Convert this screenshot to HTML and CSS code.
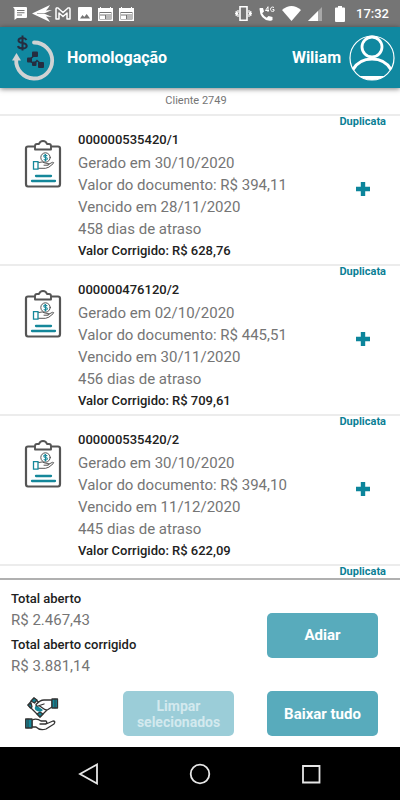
FILE: index.html
```html
<!DOCTYPE html>
<html lang="pt-BR">
<head>
<meta charset="utf-8">
<meta name="viewport" content="width=device-width, initial-scale=1">
<title>Homologação</title>
<link rel="stylesheet" href="styles.css">
</head>
<body>
<svg class="defs" aria-hidden="true">
  <symbol id="clipboard" viewBox="0 0 50 50">
    <g fill="none" stroke="#555" stroke-width="2.200" stroke-linejoin="round" stroke-linecap="round">
      <path d="M16 6.500H10q-2 0-2 2V44q0 2.500 2 2.500h30q2 0 2-2.500V8.500q0-2-2-2h-6"/>
      <path d="M17 9.500V6q0-2 2-2h2q1-3 4-3t4 3h2q2 0 2 2v3.500z" stroke-width="1.900"/>
      <circle cx="27.500" cy="17.500" r="4.700" stroke-width="1"/>
      <path d="M20.500 22.500q4-1.500 7 .7l3 .3q1.500 1-.5 1.700h-4M30 24.500l4.500-2.200q2-.2.500 1.500-4.500 4.500-7.500 4.500h-7" stroke-width="1"/>
    </g>
    <g fill="none" stroke="#14879a">
      <path d="M15.500 21.700h4.500v7.500h-4.500z" stroke-width="1.300"/>
      <path d="M29.300 15.800q-3.600-1.500-3.500.4.100 1.200 1.800 1.300 2 .2 1.700 1.700-.5 1.500-3.600.2M27.500 14v7.500" stroke-width="1.100"/>
      <path d="M18 36h15M14 41h23" stroke-width="2.300" stroke-linecap="round"/>
    </g>
  </symbol>
  <symbol id="plus" viewBox="0 0 14 14"><path fill="#0c859b" d="M4.800 0h4.400v4.800H14v4.400H9.200V14H4.800V9.200H0V4.800h4.800z"/></symbol>
  <symbol id="news" viewBox="0 0 15 14">
    <path fill="#fff" fill-rule="evenodd" d="M0 1h2V0h1v1h9V0h1v1h2v13H0zM1.500 5v7.500h12V5z"/>
    <path fill="#fff" d="M2 6h11v1.500H2zM2 8.500h5V12H2zM8 8.500h5v1H8zM8 10.500h5v1H8z"/>
  </symbol>
</svg>

<div class="app">
  <div class="status">
    <div class="status-left">
      <svg width="14" height="13" viewBox="0 0 14 13"><path fill="#fff" fill-rule="evenodd" d="M0 0h13q1 0 1 1v9q0 1-1 1H4l-2.500 2V2zM4 3v1h7.500V3zM4 5.200v1h7.500v-1zM4 7.500v1h5v-1z"/></svg>
      <svg width="20" height="17" viewBox="0 0 20 17"><path fill="#fff" d="M0 8.500 18 0q-1.500 3-4 5.500L20 5l-8 3.500 8 3.500-6-.5Q16.500 14 18 17z"/><path d="M5 8.500h9" stroke="#757575" stroke-width=".6"/></svg>
      <svg width="16" height="13" viewBox="0 0 16 13"><path fill="none" stroke="#fff" stroke-width="1.500" stroke-linejoin="round" d="M1 12V2q0-1.500 2-1l5 4.500L13 1q2-.5 2 1v10h-3V6L8 9.500 4 6v6z"/></svg>
      <svg width="14" height="14" viewBox="0 0 14 14"><path fill="#fff" fill-rule="evenodd" d="M1 0h12q1 0 1 1v12q0 1-1 1H1q-1 0-1-1V1q0-1 1-1zM2 11.500h10L8.700 7 6.300 10 4.500 8z"/></svg>
      <svg width="15" height="14"><use href="#news"/></svg>
      <svg width="15" height="14"><use href="#news"/></svg>
    </div>
    <div class="status-right">
      <svg width="17" height="15" viewBox="0 0 17 15"><g fill="none" stroke="#fff" stroke-width="1.200"><path d="M5 .8h7v13.400H5z" stroke-width="1.600"/><path d="M3 4v2.500L2 7.500l1 1V11M1 5l.5 1.500L.500 7.500l1 1L1 10M14 4v2.500l1 1-1 1V11M16 5l-.5 1.500 1 1-1 1L16 10"/></g></svg>
      <svg width="16" height="15" viewBox="0 0 16 15"><path fill="#fff" d="M1 2h3l1 3.500-1.800 1.800q1.500 3 4.500 4.500l1.800-1.800 4 1V14q-1 1-3 .7Q1 13.500.5 3 .5 2 1 2z"/><g fill="none" stroke="#fff"><path d="M9 6V.7L6.500 4.500H10M15 1.500Q12 0 11.500 3.300q.5 3 3.500 1.700V3.500h-1.500"/></g></svg>
      <svg width="19" height="15" viewBox="0 0 19 15"><path fill="#fff" d="M0 4q9.500-8 19 0L9.500 15z"/></svg>
      <svg width="14" height="14" viewBox="0 0 14 14"><path fill="#a8a8a8" d="M14 0v14H0z"/><path fill="#fff" d="M10 4v10H0z"/></svg>
      <svg class="battery" width="10" height="16" viewBox="0 0 10 16"><path fill="#fff" d="M3 0h4v1.500h2q1 0 1 1V15q0 1-1 1H1q-1 0-1-1V2.500q0-1 1-1h2z"/></svg>
      <span class="clock">17:32</span>
    </div>
  </div>

  <header class="bar">
    <svg width="44" height="46" viewBox="0 0 44 46">
      <path d="M22 7.500a18 18 0 1 1-17.800 17" fill="none" stroke="#d0d2d3" stroke-width="3.800" stroke-linecap="round"/>
      <path fill="#d0d2d3" d="M0 25.500 4.500 18 9 25.500z"/>
      <path d="M14.500 5q-1-2-4-2-4 0-4 2.500 0 2 4 2.500t4.300 3q-.3 2.500-4.300 2.500T6 11M10.500.5v15" fill="none" stroke="#252d40" stroke-width="2"/>
      <g fill="#252d40"><rect x="20" y="16.500" width="6" height="5.500" rx="1"/><rect x="15" y="22.500" width="5" height="5" rx="1"/><rect x="20" y="26.500" width="4.500" height="4.500" rx="1"/><rect x="26" y="27" width="6" height="6" rx="1"/></g>
      <path d="m23 20-6 5 5 4 3-3.500 4 3.500" fill="none" stroke="#252d40" stroke-width="1.500"/>
    </svg>
    <h1 class="title">Homologação</h1>
    <span class="user">Wiliam</span>
    <svg width="46" height="46" viewBox="0 0 46 46" fill="none" stroke="#fff"><circle cx="23" cy="23" r="22" stroke-width="1.200"/><circle cx="23" cy="12" r="10" stroke-width="2.800"/><path d="M4 34.500Q10 24 23 24t19 10.500" stroke-width="3.200"/><path d="M10 41h26q-6 4-13 4t-13-4z" fill="#fff" stroke="none"/></svg>
  </header>

  <main class="list">
    <p class="client">Cliente 2749</p>
    <ul class="docs">
      <li class="doc">
        <svg class="doc-icon"><use href="#clipboard"/></svg>
        <div class="doc-text">
          <h2 class="doc-number">000000535420/1</h2>
          <p>Gerado em 30/10/2020</p>
          <p>Valor do documento: R$ 394,11</p>
          <p>Vencido em 28/11/2020</p>
          <p>458 dias de atraso</p>
          <p class="fixed">Valor Corrigido: R$ 628,76</p>
        </div>
        <div class="doc-side"><span>Duplicata</span><button class="add" aria-label="Adicionar"><svg width="14" height="14"><use href="#plus"/></svg></button></div>
      </li>
      <li class="doc">
        <svg class="doc-icon"><use href="#clipboard"/></svg>
        <div class="doc-text">
          <h2 class="doc-number">000000476120/2</h2>
          <p>Gerado em 02/10/2020</p>
          <p>Valor do documento: R$ 445,51</p>
          <p>Vencido em 30/11/2020</p>
          <p>456 dias de atraso</p>
          <p class="fixed">Valor Corrigido: R$ 709,61</p>
        </div>
        <div class="doc-side"><span>Duplicata</span><button class="add" aria-label="Adicionar"><svg width="14" height="14"><use href="#plus"/></svg></button></div>
      </li>
      <li class="doc">
        <svg class="doc-icon"><use href="#clipboard"/></svg>
        <div class="doc-text">
          <h2 class="doc-number">000000535420/2</h2>
          <p>Gerado em 30/10/2020</p>
          <p>Valor do documento: R$ 394,10</p>
          <p>Vencido em 11/12/2020</p>
          <p>445 dias de atraso</p>
          <p class="fixed">Valor Corrigido: R$ 622,09</p>
        </div>
        <div class="doc-side"><span>Duplicata</span><button class="add" aria-label="Adicionar"><svg width="14" height="14"><use href="#plus"/></svg></button></div>
      </li>
      <li class="doc">
        <div class="doc-side"><span>Duplicata</span></div>
      </li>
    </ul>
  </main>

  <footer class="summary">
    <dl class="totals">
      <dt>Total aberto</dt><dd>R$ 2.467,43</dd>
      <dt>Total aberto corrigido</dt><dd>R$ 3.881,14</dd>
    </dl>
    <button class="btn">Adiar</button>
    <svg class="hands" width="34" height="34" viewBox="0 0 34 34">
      <g stroke="#333" stroke-width="1.300" stroke-linejoin="round" stroke-linecap="round">
        <path fill="#fff" d="M9 1 3 8l12 12 7-7z"/>
        <path fill="#14879a" d="m9 1-3 3 3.500 2L12 3zM3 8l3-2 1 4-1.500 1zM12 17l3-2 3 2-3 3z"/>
        <path fill="#14879a" stroke="none" d="M11 8q-3 4 1 6t6-1z"/>
        <path fill="#fff" d="M27 3h-8q-4 0-8 4.500 0 2.500 3.500 1l4.500-1.500M14 8.500l5 3.500q2 1.500 4 .5l4-2.500V3"/>
        <path fill="#14879a" d="M27 2h5.500v9H27z"/>
        <path fill="#fff" d="M7 23q5-2 9 1h5q2 2-1 3h-5 6l7-3q3 0 1 3l-8 5q-6 2-10-2H7z"/>
        <path fill="#14879a" d="M.7 22H7v9H.7z"/>
        <path d="M30 2v9M3 22v9" fill="none" stroke-width=".8"/>
      </g>
    </svg>
    <button class="btn" disabled>Limpar selecionados</button>
    <button class="btn">Baixar tudo</button>
  </footer>

  <nav class="nav">
    <button aria-label="Voltar"><svg width="22" height="22" viewBox="0 0 22 22"><path d="M19 1.500v19L2 11z"/></svg></button>
    <button aria-label="Início"><svg width="22" height="22" viewBox="0 0 22 22"><circle cx="11" cy="11" r="9.300"/></svg></button>
    <button aria-label="Recentes"><svg width="22" height="22" viewBox="0 0 22 22"><path d="M3 3h16.500v16.500H3z"/></svg></button>
  </nav>
</div>
</body>
</html>
```
FILE: styles.css
```css
* { box-sizing: border-box; margin: 0; padding: 0; }
body { font-family: Roboto, "Liberation Sans", sans-serif; background: #fff; color: #757575; }
svg { display: block; flex: none; }
button { font: inherit; border: 0; background: none; }
.defs { position: absolute; width: 0; height: 0; }
.app { display: flex; flex-direction: column; height: 100vh; }

.status { display: flex; justify-content: space-between; align-items: center; height: 27px; padding: 0 11px 0 13px; background: #757575; flex: none; }
.status-left { display: flex; align-items: center; gap: 6px; }
.status-left svg:nth-child(2) { margin: 0 -3px 0 -1px; }
.status-left svg:nth-child(3) { margin-right: 1px; }
.status-right { display: flex; align-items: center; gap: 7px; }
.battery { margin: 0 4px 0 6px; }
.clock { color: #fff; font-size: 13px; font-weight: 500; line-height: 20px; }

.bar { display: flex; align-items: center; height: 61px; padding: 0 5px 0 12px; background: #1088a0; color: #fff; font-size: 16px; font-weight: 700; box-shadow: 0 1px 5px rgba(0, 0, 0, .5); flex: none; z-index: 1; }
.title { font-size: 16px; font-weight: 700; margin-left: 11px; }
.user { margin: 0 8px 0 auto; }

.list { flex: 1; min-height: 0; overflow: hidden; }
.client { font-size: 11px; line-height: 26px; text-align: center; padding-right: 8px; }
.docs { list-style: none; }
.doc { display: flex; height: 150px; border-top: 2px solid #ececec; padding-left: 18px; }
.doc-icon { width: 50px; height: 50px; margin: 24px 10px 0 0; }
.doc-text { flex: 1; padding-top: 12px; font-size: 15px; line-height: 22px; white-space: nowrap; }
.doc-number { color: #212121; font-size: 13px; line-height: 24px; font-weight: 500; }
.doc-text .fixed { color: #212121; font-size: 13px; font-weight: 500; }
.doc-side { display: flex; flex-direction: column; align-items: center; margin-left: auto; padding-right: 14px; color: #0c7f96; font-size: 11px; line-height: 12px; font-weight: 700; }
.add { margin-top: 48px; padding: 6px; }

.summary { display: grid; grid-template-columns: 1fr 111px 111px; column-gap: 33px; align-items: center; height: 169px; border-top: 2px solid #b0b0b0; padding: 9px 22px 11px 11px; grid-template-rows: 92px 45px; row-gap: 10px; flex: none; }
.totals { grid-column: 1 / 3; align-self: start; }
.totals dt { color: #212121; font-size: 13px; line-height: 20px; font-weight: 500; }
.totals dd { font-size: 15px; line-height: 22px; margin-bottom: 4px; }
.hands { margin-left: 14px; }
.btn { height: 45px; border-radius: 5px; background: #58abbc; color: #fff; font-size: 15px; line-height: 16px; font-weight: 700; }
.btn:disabled { background: #9bcdd8; color: #d3e9ee; font-size: 14px; }

.nav { display: flex; justify-content: space-between; align-items: center; height: 53px; padding: 0 78px; background: #000; flex: none; }
.nav svg { fill: none; stroke: #e6e6e6; stroke-width: 1.8; }
```
